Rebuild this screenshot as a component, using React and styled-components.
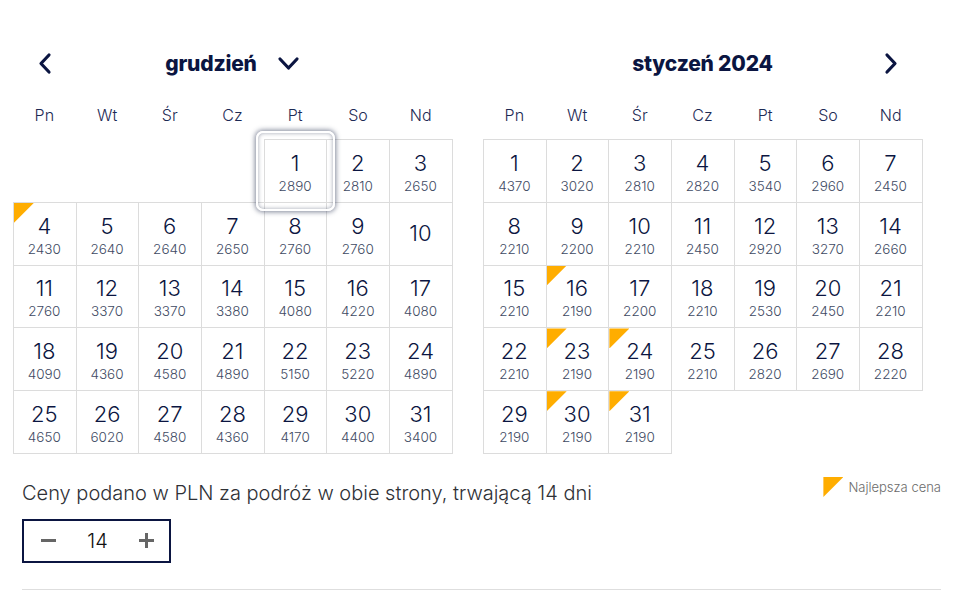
import React from "react";
import styled, { createGlobalStyle } from "styled-components";

const GlobalStyle = createGlobalStyle`
  html, body { margin: 0; padding: 0; background: #fff; }
  body { font-family: Inter, "Noto Sans", sans-serif; color: #0b1541; }
`;

const NAVY = "#0b1541";
const LINE = "#dcdcdc";
const BEST = "#ffad00";

const december = {
  title: "grudzień",
  dropdown: true,
  nav: "prev",
  offset: 4,
  days: [
    2890, 2810, 2650, 2430, 2640, 2640, 2650, 2760, 2760, null, 2760, 3370,
    3370, 3380, 4080, 4220, 4080, 4090, 4360, 4580, 4890, 5150, 5220, 4890,
    4650, 6020, 4580, 4360, 4170, 4400, 3400,
  ],
  best: [4],
  selected: 1,
};

const january = {
  title: "styczeń 2024",
  dropdown: false,
  nav: "next",
  offset: 0,
  days: [
    4370, 3020, 2810, 2820, 3540, 2960, 2450, 2210, 2200, 2210, 2450, 2920,
    3270, 2660, 2210, 2190, 2200, 2210, 2530, 2450, 2210, 2210, 2190, 2190,
    2210, 2820, 2690, 2220, 2190, 2190, 2190,
  ],
  best: [16, 23, 24, 30, 31],
  selected: null,
};

const weekdays = ["Pn", "Wt", "Śr", "Cz", "Pt", "So", "Nd"];

const Page = styled.div`
  width: 958px;
  height: 593px;
  box-sizing: border-box;
  padding: 41px 0 0 13px;
  overflow: hidden;
`;

const Months = styled.div`
  display: flex;
  gap: 31px;
`;

const Month = styled.section`
  width: 439px;
  display: flex;
  flex-direction: column;
`;

const MonthHeader = styled.header`
  height: 44px;
  display: flex;
  align-items: center;
`;

const NavSlot = styled.div`
  width: 63px;
  height: 44px;
  display: flex;
  align-items: center;
  justify-content: center;
  flex: none;
`;

const NavButton = styled.button`
  border: 0;
  background: none;
  padding: 0;
  cursor: pointer;
  display: flex;
  color: ${NAVY};
`;

const TitleWrap = styled.div`
  flex: 1;
  display: flex;
  align-items: center;
  justify-content: center;
  gap: 20px;
`;

const Title = styled.h2`
  margin: 0;
  font-size: 21px;
  font-weight: 800;
  letter-spacing: -0.2px;
  color: ${NAVY};
`;

const Weekdays = styled.div`
  display: grid;
  grid-template-columns: repeat(7, 1fr);
  height: 54px;
  box-sizing: border-box;
  padding-top: 6px;
  align-items: center;
`;

const Weekday = styled.div`
  text-align: center;
  font-size: 16px;
  font-weight: 300;
  color: #1d2a55;
`;

const Grid = styled.div`
  display: grid;
  grid-template-columns: repeat(7, 62.7px);
  grid-auto-rows: 62.8px;
`;

const Cell = styled.div`
  position: relative;
  box-sizing: border-box;
  padding-top: ${(p) => (p.$bare ? 0 : 5)}px;
  display: flex;
  flex-direction: column;
  align-items: center;
  justify-content: center;
  gap: 2px;
  box-shadow: 1px 0 0 0 ${LINE}, 0 1px 0 0 ${LINE}, 1px 1px 0 0 ${LINE},
    1px 0 0 0 ${LINE} inset, 0 1px 0 0 ${LINE} inset;
  cursor: pointer;
  z-index: ${(p) => (p.$selected ? 2 : 0)};

  &::before {
    content: "";
    display: ${(p) => (p.$best ? "block" : "none")};
    position: absolute;
    left: 1px;
    top: 1px;
    width: 20px;
    height: 20px;
    background: ${BEST};
    clip-path: polygon(0 0, 100% 0, 0 100%);
  }

  &::after {
    content: "";
    display: ${(p) => (p.$selected ? "block" : "none")};
    position: absolute;
    inset: -8px -9px -9px -8px;
    border-radius: 7px;
    border: 2px solid #fff;
    box-shadow: 0 0 5px 1px rgba(45, 55, 85, 0.6),
      inset 0 0 4px 0 rgba(45, 55, 85, 0.45);
  }
`;

const Empty = styled.div``;

const DayNum = styled.span`
  font-size: 22px;
  font-weight: 300;
  line-height: 24px;
  color: ${NAVY};
`;

const Price = styled.span`
  font-size: 13.5px;
  font-weight: 300;
  line-height: 18px;
  color: #3e4a63;
`;

const Footer = styled.footer`
  margin-left: 9px;
  width: 919px;
`;

const InfoRow = styled.div`
  display: flex;
  justify-content: space-between;
  align-items: flex-start;
`;

const Info = styled.p`
  margin: 28px 0 0;
  font-size: 20px;
  line-height: 24px;
  font-weight: 300;
  color: #2f3136;
`;

const Legend = styled.div`
  margin-top: 24px;
  display: flex;
  align-items: center;
  gap: 5px;
  font-size: 13px;
  font-weight: 300;
  color: #6b6b6b;
`;

const LegendMark = styled.span`
  width: 20px;
  height: 20px;
  background: ${BEST};
  clip-path: polygon(0 0, 100% 0, 0 100%);
`;

const Stepper = styled.div`
  margin-top: 14px;
  width: 149px;
  height: 44px;
  box-sizing: border-box;
  border: 2px solid ${NAVY};
  display: flex;
  align-items: center;
  justify-content: space-between;
  padding: 0 14px 0 16px;
`;

const StepButton = styled.button`
  border: 0;
  background: none;
  padding: 0;
  display: flex;
  cursor: pointer;
`;

const StepValue = styled.span`
  font-size: 20px;
  font-weight: 300;
  color: #111;
`;

const Divider = styled.hr`
  margin: 26px 0 0;
  border: 0;
  border-top: 1px solid #dedede;
`;

const Chevron = ({ dir }) => {
  const paths = {
    left: "M12 3 L4 11.5 L12 20",
    right: "M4 3 L12 11.5 L4 20",
    down: "M3 4 L11.5 13 L20 4",
  };
  const box = dir === "down" ? "0 0 23 16" : "0 0 16 23";
  const [w, h] = dir === "down" ? [23, 16] : [16, 23];
  return (
    <svg width={w} height={h} viewBox={box} fill="none">
      <path
        d={paths[dir]}
        stroke={NAVY}
        strokeWidth="3.2"
        strokeLinecap="round"
        strokeLinejoin="round"
      />
    </svg>
  );
};

const Sign = ({ plus }) => (
  <svg width="17" height="17" viewBox="0 0 17 17">
    <path d="M1 8.5 H16" stroke="#666" strokeWidth="3" />
    {plus && <path d="M8.5 1 V16" stroke="#666" strokeWidth="3" />}
  </svg>
);

const MonthView = ({ data }) => (
  <Month>
    <MonthHeader>
      <NavSlot>
        {data.nav === "prev" && (
          <NavButton aria-label="poprzedni miesiąc">
            <Chevron dir="left" />
          </NavButton>
        )}
      </NavSlot>
      <TitleWrap>
        <Title>{data.title}</Title>
        {data.dropdown && <Chevron dir="down" />}
      </TitleWrap>
      <NavSlot>
        {data.nav === "next" && (
          <NavButton aria-label="następny miesiąc">
            <Chevron dir="right" />
          </NavButton>
        )}
      </NavSlot>
    </MonthHeader>
    <Weekdays>
      {weekdays.map((d) => (
        <Weekday key={d}>{d}</Weekday>
      ))}
    </Weekdays>
    <Grid>
      {Array.from({ length: data.offset }, (_, i) => (
        <Empty key={`e${i}`} />
      ))}
      {data.days.map((price, i) => {
        const day = i + 1;
        return (
          <Cell
            key={day}
            $bare={!price}
            $best={data.best.includes(day)}
            $selected={data.selected === day}
          >
            <DayNum>{day}</DayNum>
            {price && <Price>{price}</Price>}
          </Cell>
        );
      })}
    </Grid>
  </Month>
);

export default function App() {
  return (
    <>
      <GlobalStyle />
      <Page>
        <Months>
          <MonthView data={december} />
          <MonthView data={january} />
        </Months>
        <Footer>
          <InfoRow>
            <Info>Ceny podano w PLN za podróż w obie strony, trwającą 14 dni</Info>
            <Legend>
              <LegendMark />
              Najlepsza cena
            </Legend>
          </InfoRow>
          <Stepper>
            <StepButton aria-label="mniej">
              <Sign />
            </StepButton>
            <StepValue>14</StepValue>
            <StepButton aria-label="więcej">
              <Sign plus />
            </StepButton>
          </Stepper>
          <Divider />
        </Footer>
      </Page>
    </>
  );
}
